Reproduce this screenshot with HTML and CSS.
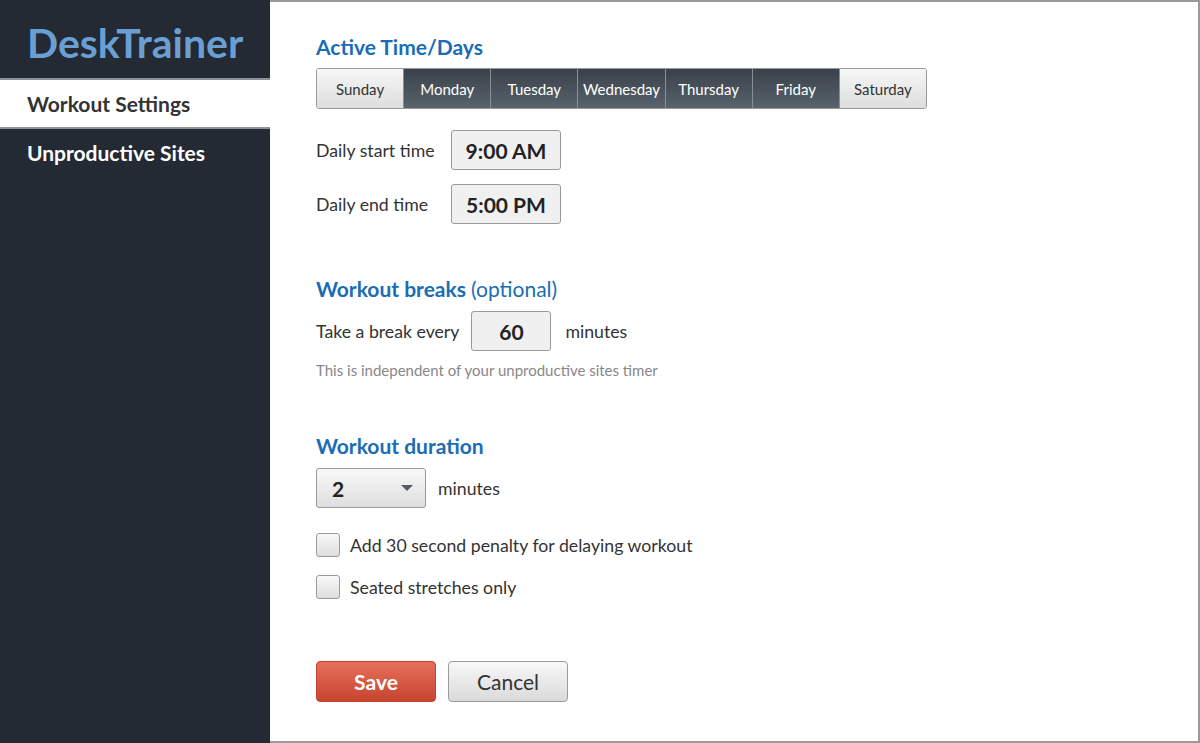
FILE: index.html
```html
<!DOCTYPE html>
<html lang="en">
<head>
    <meta charset="UTF-8">
    <title>DeskTrainer - Workout Settings</title>
    <link rel="stylesheet" href="styles.css">
</head>
<body>
    <div class="sidebar">
        <div class="brand">DeskTrainer</div>
        <a class="nav-item active" href="#">Workout Settings</a>
        <a class="nav-item" href="#">Unproductive Sites</a>
    </div>

    <div class="main">
        <h2>Active Time/Days</h2>
        <div class="days">
            <button class="day">Sunday</button>
            <button class="day on">Monday</button>
            <button class="day on">Tuesday</button>
            <button class="day on">Wednesday</button>
            <button class="day on">Thursday</button>
            <button class="day on">Friday</button>
            <button class="day">Saturday</button>
        </div>

        <div class="row time-row first">
            <span class="label">Daily start time</span>
            <span class="box time">9:00 AM</span>
        </div>
        <div class="row time-row">
            <span class="label">Daily end time</span>
            <span class="box time">5:00 PM</span>
        </div>

        <h2 class="section">Workout breaks <span class="light">(optional)</span></h2>
        <div class="row break-row">
            <span class="label">Take a break every</span>
            <span class="box num">60</span>
            <span class="label">minutes</span>
        </div>
        <p class="hint">This is independent of your unproductive sites timer</p>

        <h2 class="section">Workout duration</h2>
        <div class="row">
            <span class="select">2 <span class="caret"></span></span>
            <span class="label">minutes</span>
        </div>

        <label class="check first"><span class="checkbox"></span>Add 30 second penalty for delaying workout</label>
        <label class="check"><span class="checkbox"></span>Seated stretches only</label>

        <div class="actions">
            <button class="btn save">Save</button>
            <button class="btn cancel">Cancel</button>
        </div>
    </div>
</body>
</html>
```

FILE: styles.css
```css
body {
    font-family: Lato, 'Open Sans', sans-serif;
    margin: 0;
    display: flex;
    height: 743px;
    color: #333333;
    background-color: #ffffff;
}

/* Sidebar */
.sidebar {
    width: 270px;
    background-color: #232a33;
    flex-shrink: 0;
}

.brand {
    height: 80px;
    box-sizing: border-box;
    padding-left: 27px;
    font-size: 41px;
    font-weight: bold;
    color: #6a9fd4;
    line-height: 86px;
    border-bottom: 2px solid #8d9298;
}

.nav-item {
    display: block;
    height: 49px;
    line-height: 47px;
    padding-left: 27px;
    font-size: 21px;
    font-weight: bold;
    color: #ffffff;
    text-decoration: none;
}

.nav-item.active {
    background-color: #ffffff;
    color: #333333;
    border-bottom: 2px solid #8d9298;
    height: 47px;
    line-height: 48px;
}

/* Main panel */
.main {
    flex: 1;
    border-top: 2px solid #9a9a9a;
    border-right: 2px solid #9a9a9a;
    border-bottom: 2px solid #9a9a9a;
    padding: 33px 0 0 46px;
}

h2 {
    margin: 0;
    font-size: 21px;
    font-weight: bold;
    color: #1a6db5;
    line-height: 24px;
}

h2 .light {
    font-weight: normal;
}

h2.section {
    margin-top: 53px;
}

.days {
    display: flex;
    width: 611px;
    height: 41px;
    margin-top: 9px;
    border: 1px solid #9a9a9a;
    border-radius: 3px;
    overflow: hidden;
    box-sizing: border-box;
}

.day {
    flex: 1;
    border: none;
    border-left: 1px solid #8a8f95;
    font-family: inherit;
    font-size: 15px;
    color: #333333;
    background: linear-gradient(#f7f7f7, #dcdddd);
    padding: 0;
}

.day:first-child {
    border-left: none;
}

.day.on {
    color: #ffffff;
    background: linear-gradient(#3a414b, #58636b);
}

.row {
    display: flex;
    align-items: center;
    gap: 12px;
    font-size: 17.7px;
    margin-top: 10px;
}

.time-row {
    height: 40px;
    gap: 14px;
    margin-top: 14px;
}

.time-row.first {
    margin-top: 21px;
}

.time-row .label {
    width: 121px;
}

.box {
    display: inline-flex;
    align-items: center;
    justify-content: center;
    height: 40px;
    box-sizing: border-box;
    border: 1px solid #9a9a9a;
    border-radius: 3px;
    background-color: #f0f0f0;
    font-size: 21px;
    font-weight: bold;
    color: #222222;
}

.time {
    width: 110px;
}

.num {
    width: 80px;
}

.break-row .num {
    margin-right: 2px;
}

.hint {
    margin: 10px 0 0;
    font-size: 15px;
    line-height: 18px;
    color: #888888;
}

.hint + h2.section {
    margin-top: 55px;
}

.select {
    display: inline-flex;
    align-items: center;
    justify-content: space-between;
    width: 110px;
    height: 40px;
    box-sizing: border-box;
    padding: 0 12px 0 15px;
    border: 1px solid #9a9a9a;
    border-radius: 3px;
    background: linear-gradient(#f8f8f8, #dedede);
    font-size: 21px;
    font-weight: bold;
    color: #222222;
}

.caret {
    width: 0;
    height: 0;
    border-left: 6px solid transparent;
    border-right: 6px solid transparent;
    border-top: 6px solid #555c63;
}

.check {
    display: flex;
    align-items: center;
    gap: 10px;
    height: 24px;
    font-size: 17.7px;
    margin-top: 18px;
}

.check.first {
    margin-top: 25px;
}

.checkbox {
    width: 24px;
    height: 24px;
    box-sizing: border-box;
    border: 1px solid #9a9a9a;
    border-radius: 3px;
    background: linear-gradient(#f8f8f8, #dedede);
}

.actions {
    display: flex;
    gap: 12px;
    margin-top: 62px;
}

.btn {
    width: 120px;
    height: 41px;
    border-radius: 4px;
    font-family: inherit;
    font-size: 21px;
    padding: 0;
}

.save {
    border: 1px solid #c0432f;
    background: linear-gradient(#e6705a, #c8442f);
    color: #ffffff;
    font-weight: bold;
}

.cancel {
    border: 1px solid #9a9a9a;
    background: linear-gradient(#f8f8f8, #dadada);
    color: #333333;
}
```
